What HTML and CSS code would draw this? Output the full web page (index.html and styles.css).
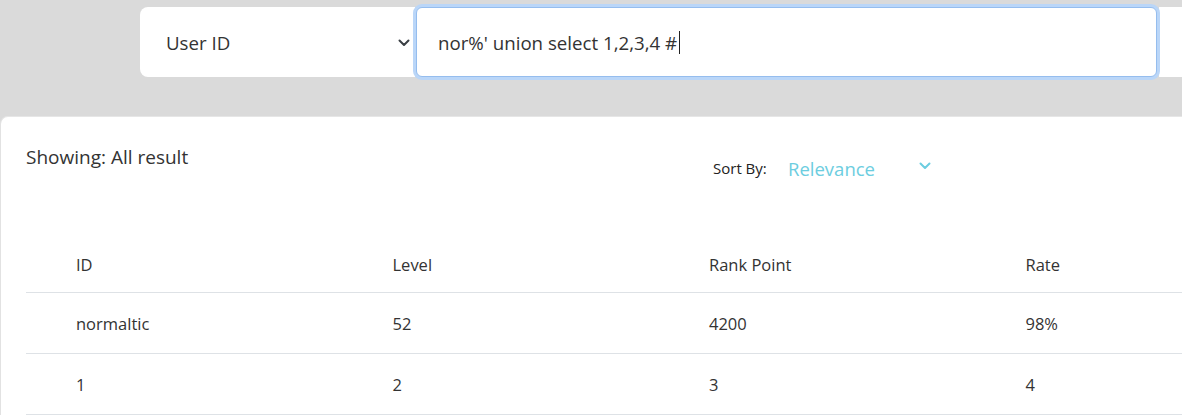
FILE: index.html
```html
<!DOCTYPE html>
<html lang="en">
<head>
<meta charset="utf-8">
<title>Search</title>
<link rel="stylesheet" href="styles.css">
</head>
<body>
<div class="top">
  <div class="search">
    <div class="select">
      <span>User ID</span>
      <svg class="chev" width="12" height="8" viewBox="0 0 12 8"><path d="M1.5 1.5 L6 6 L10.5 1.5" fill="none" stroke="#3a3f44" stroke-width="2" stroke-linecap="round" stroke-linejoin="round"/></svg>
    </div>
    <div class="input"><span>nor%' union select 1,2,3,4 #</span><span class="caret"></span></div>
    <div class="btn"></div>
  </div>
</div>
<div class="card">
  <div class="card-head">
    <div class="showing">Showing: All result</div>
    <div class="sort">
      <span class="sort-label">Sort By:</span>
      <div class="sort-select">
        <span>Relevance</span>
        <svg class="chev-c" width="12" height="8" viewBox="0 0 12 8"><path d="M1.5 1.5 L6 6 L10.5 1.5" fill="none" stroke="#6ccde0" stroke-width="2" stroke-linecap="round" stroke-linejoin="round"/></svg>
      </div>
    </div>
  </div>
  <table class="results">
    <thead>
      <tr><th>ID</th><th>Level</th><th>Rank Point</th><th class="last">Rate</th></tr>
    </thead>
    <tbody>
      <tr><td>normaltic</td><td>52</td><td>4200</td><td class="last">98%</td></tr>
      <tr><td>1</td><td>2</td><td>3</td><td class="last">4</td></tr>
    </tbody>
  </table>
</div>
</body>
</html>
```
FILE: styles.css
```css
html, body {
  margin: 0;
  overflow: hidden;
}
body {
  background: #dadada;
  font-family: "Open Sans", "Noto Sans", sans-serif;
  color: #333;
  width: 1182px;
  height: 415px;
}
.top {
  padding: 7px 0 0 140px;
  height: 109px;
  box-sizing: content-box;
}
.search {
  display: flex;
  height: 70px;
  width: 1042px;
}
.select {
  width: 275px;
  background: #fff;
  border-radius: 8px 0 0 8px;
  display: flex;
  align-items: center;
  justify-content: space-between;
  padding: 0 5px 0 26px;
  box-sizing: border-box;
  font-size: 18.7px;
  color: #333;
}
.chev {
  margin-top: 1px;
}
.input {
  width: 741px;
  margin-left: 1px;
  background: #fff;
  border: 1px solid #95bdee;
  border-radius: 6px;
  box-shadow: 0 0 0 3px #bad6f8;
  box-sizing: border-box;
  display: flex;
  align-items: center;
  padding-left: 21px;
  font-size: 18.7px;
  color: #333;
  position: relative;
  z-index: 1;
}
.caret {
  display: inline-block;
  width: 1px;
  height: 23px;
  background: #222;
  margin-left: 2px;
}
.btn {
  flex: 1;
  margin-left: 2px;
  background: #fff;
}
.card {
  background: #fff;
  width: 1182px;
  height: 299px;
  overflow: hidden;
  border-top-left-radius: 8px;
  border-left: 1px solid #e2e2e2;
  border-top: 1px solid #e6e6e6;
  box-sizing: border-box;
  padding: 27px 0 0 25px;
}
.card-head {
  display: flex;
  height: 92px;
}
.showing {
  width: 687px;
  font-size: 19px;
  line-height: 26px;
  color: #333;
}
.sort {
  display: flex;
  align-items: center;
  height: 40px;
  margin-top: 4px;
}
.sort-label {
  font-size: 15px;
  color: #222;
  width: 75px;
}
.sort-select {
  display: flex;
  align-items: center;
  width: 143px;
  justify-content: space-between;
  font-size: 18.5px;
  color: #6ccde0;
}
.chev-c {
  margin-top: -4px;
}
.results {
  border-collapse: collapse;
  font-size: 16.5px;
  color: #333;
  table-layout: fixed;
  width: 1156px;
}
.results th,
.results td {
  width: 266.5px;
  padding: 0 0 0 50px;
  height: 60px;
  text-align: left;
  font-weight: normal;
  border-bottom: 1px solid #dee2e6;
}
.results th.last,
.results td.last {
  width: auto;
}
.results thead th {
  height: 56px;
  vertical-align: middle;
}
```
